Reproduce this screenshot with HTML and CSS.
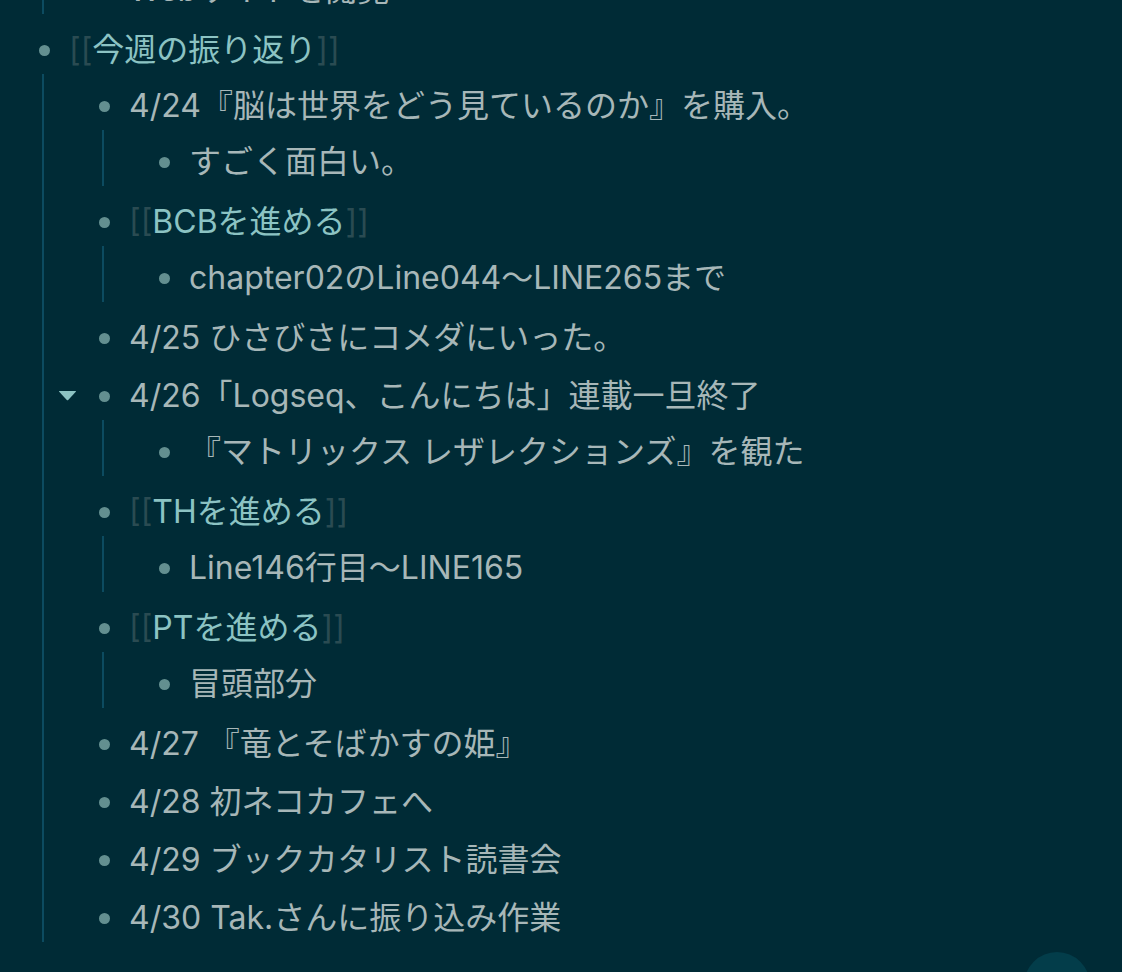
FILE: index.html
```html
<!DOCTYPE html>
<html lang="ja">
<head>
<meta charset="utf-8">
<title>今週の振り返り</title>
<link rel="stylesheet" href="styles.css">
</head>
<body>
<div class="page">
  <div class="children top-cut">
    <div class="block">
      <div class="row"><span class="bullet-wrap"><span class="bullet"></span></span><div class="content">Webサイトを閲覧</div></div>
    </div>
  </div>

  <div class="block">
    <div class="row"><span class="bullet-wrap"><span class="bullet"></span></span><div class="content"><span class="bracket">[[</span><span class="link">今週の振り返り</span><span class="bracket">]]</span></div></div>
    <div class="children">
      <div class="block">
        <div class="row"><span class="bullet-wrap"><span class="bullet"></span></span><div class="content">4/24『脳は世界をどう見ているのか』を購入。</div></div>
        <div class="children">
          <div class="block">
            <div class="row"><span class="bullet-wrap"><span class="bullet"></span></span><div class="content">すごく面白い。</div></div>
          </div>
        </div>
      </div>
      <div class="block">
        <div class="row"><span class="bullet-wrap"><span class="bullet"></span></span><div class="content"><span class="bracket">[[</span><span class="link">BCBを進める</span><span class="bracket">]]</span></div></div>
        <div class="children">
          <div class="block">
            <div class="row"><span class="bullet-wrap"><span class="bullet"></span></span><div class="content">chapter02のLine044〜LINE265まで</div></div>
          </div>
        </div>
      </div>
      <div class="block">
        <div class="row"><span class="bullet-wrap"><span class="bullet"></span></span><div class="content">4/25 ひさびさにコメダにいった。</div></div>
      </div>
      <div class="block">
        <div class="row">
          <span class="toggle"><svg width="19" height="11" viewBox="0 0 19 11"><path d="M1.5 1 H17.5 Q18.5 1 17.8 1.8 L10.2 10 Q9.5 10.7 8.8 10 L1.2 1.8 Q0.5 1 1.5 1 Z" fill="#8cc3c3"/></svg></span>
          <span class="bullet-wrap"><span class="bullet"></span></span><div class="content">4/26「Logseq、こんにちは」連載一旦終了</div>
        </div>
        <div class="children">
          <div class="block">
            <div class="row"><span class="bullet-wrap"><span class="bullet"></span></span><div class="content">『マトリックス レザレクションズ』を観た</div></div>
          </div>
        </div>
      </div>
      <div class="block">
        <div class="row"><span class="bullet-wrap"><span class="bullet"></span></span><div class="content"><span class="bracket">[[</span><span class="link">THを進める</span><span class="bracket">]]</span></div></div>
        <div class="children">
          <div class="block">
            <div class="row"><span class="bullet-wrap"><span class="bullet"></span></span><div class="content">Line146行目〜LINE165</div></div>
          </div>
        </div>
      </div>
      <div class="block">
        <div class="row"><span class="bullet-wrap"><span class="bullet"></span></span><div class="content"><span class="bracket">[[</span><span class="link">PTを進める</span><span class="bracket">]]</span></div></div>
        <div class="children">
          <div class="block">
            <div class="row"><span class="bullet-wrap"><span class="bullet"></span></span><div class="content">冒頭部分</div></div>
          </div>
        </div>
      </div>
      <div class="block">
        <div class="row"><span class="bullet-wrap"><span class="bullet"></span></span><div class="content">4/27 『竜とそばかすの姫』</div></div>
      </div>
      <div class="block">
        <div class="row"><span class="bullet-wrap"><span class="bullet"></span></span><div class="content">4/28 初ネコカフェへ</div></div>
      </div>
      <div class="block">
        <div class="row"><span class="bullet-wrap"><span class="bullet"></span></span><div class="content">4/29 ブックカタリスト読書会</div></div>
      </div>
      <div class="block">
        <div class="row"><span class="bullet-wrap"><span class="bullet"></span></span><div class="content">4/30 Tak.さんに振り込み作業</div></div>
      </div>
    </div>
  </div>
</div>
<div class="help-button">?</div>
</body>
</html>
```

FILE: styles.css
```css
html, body {
  margin: 0;
  padding: 0;
  background: #002b36;
  height: 100%;
  overflow: hidden;
}

body {
  font-family: "Inter", "Noto Sans CJK JP", sans-serif;
  font-size: 32px;
  color: #a7b7b8;
}

.page {
  padding-left: 30px;
  margin-top: -39px;
}

.block {
  display: flex;
  flex-direction: column;
}

.row {
  position: relative;
  display: flex;
  align-items: center;
  height: 58px;
}

.bullet-wrap {
  width: 28px;
  height: 28px;
  display: flex;
  align-items: center;
  justify-content: center;
  flex: none;
}

.bullet {
  width: 11px;
  height: 11px;
  border-radius: 50%;
  background: #638f90;
}

.content {
  margin-left: 11px;
  white-space: nowrap;
  line-height: 1.3;
}

.link {
  color: #8cc3c3;
}

.bracket {
  color: #2a4b52;
}

.children {
  position: relative;
  margin-left: 60px;
  margin-top: -2px;
  margin-bottom: 2px;
}

.children::before {
  content: "";
  position: absolute;
  left: -48px;
  width: 2px;
  top: -3px;
  bottom: 5px;
  background: #0c4b60;
}

.toggle {
  position: absolute;
  left: -32px;
  top: 23px;
  width: 19px;
  height: 11px;
  display: flex;
}

.help-button {
  position: fixed;
  right: 32px;
  bottom: -46px;
  width: 66px;
  height: 66px;
  border-radius: 50%;
  background: #033d4a;
  color: #a4b5b6;
  font-family: "Inter", sans-serif;
  font-size: 28px;
  display: flex;
  align-items: center;
  justify-content: center;
}
```
